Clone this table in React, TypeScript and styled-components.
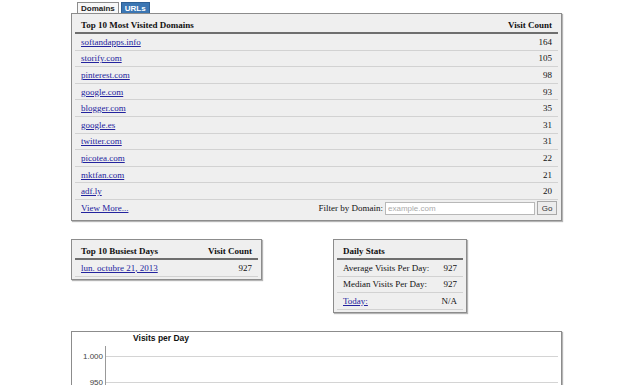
import styled, {createGlobalStyle} from "styled-components";

const GlobalStyle = createGlobalStyle`
  html, body {
    margin: 0;
    padding: 0;
    background: #ffffff;
  }
  body {
    font-family: "Liberation Serif", "Times New Roman", serif;
    font-size: 9px;
    color: #111;
  }
`

const Page = styled.div`
  display: flex;
  flex-direction: column;
  align-items: flex-start;
  padding: 2px 0 0 71px;
`

const TabBar = styled.div`
  display: flex;
  gap: 2px;
  padding-left: 6px;
  height: 11px;
`

const TabButton = styled.div<{ $active?: boolean }>`
  display: flex;
  align-items: center;
  padding: 0 3px;
  font-family: "Liberation Sans", Arial, sans-serif;
  font-size: 8px;
  font-weight: bold;
  border: 1px solid ${p => p.$active ? "#8c8c8c" : "#2d5f94"};
  border-bottom: none;
  background: ${p => p.$active ? "#f7f7f7" : "#3b76b3"};
  color: ${p => p.$active ? "#222" : "#fff"};
`

const Panel = styled.div<{ $width: number }>`
  box-sizing: border-box;
  width: ${p => p.$width}px;
  background: #efefef;
  border: 1px solid #8c8c8c;
  box-shadow: 1px 1px 1px #b5b5b5;
  padding: 4px 3px 3px;
`

const HeadRow = styled.div`
  display: flex;
  justify-content: space-between;
  align-items: center;
  height: 14px;
  padding: 0 6px;
  font-weight: bold;
  border-bottom: 2px solid #6e6e6e;
`

const Row = styled.div`
  box-sizing: border-box;
  display: flex;
  justify-content: space-between;
  align-items: center;
  height: 16.6px;
  padding: 0 6px;
  border-bottom: 1px solid #d2d2d2;
`

const Link = styled.a`
  color: #23239e;
  text-decoration: underline;
  cursor: pointer;
`

const Footer = styled.div`
  display: flex;
  align-items: center;
  justify-content: space-between;
  height: 17px;
  padding: 0 1px 0 6px;
`

const FilterForm = styled.div`
  display: flex;
  align-items: center;
  gap: 2px;
`

const FilterInput = styled.input`
  box-sizing: border-box;
  width: 150px;
  height: 13px;
  border: 1px solid #b8b8b8;
  background: #fff;
  padding: 0 2px;
  font-family: "Liberation Sans", Arial, sans-serif;
  font-size: 8px;
  outline: none;
  &::placeholder {
    color: #aaa;
  }
`

const GoButton = styled.button`
  box-sizing: border-box;
  height: 14px;
  width: 20px;
  padding: 0;
  border: 1px solid #a8a8a8;
  background: #ececec;
  font-family: "Liberation Sans", Arial, sans-serif;
  font-size: 8px;
  color: #333;
`

const StatsRow = styled.div`
  display: flex;
  align-items: flex-start;
  gap: 71px;
  margin-top: 18px;
`

const SmallPanel = styled(Panel)`
  padding: 4px 3px 2px;
`

const ChartBox = styled.div`
  box-sizing: border-box;
  width: 491px;
  height: 240px;
  margin-top: 18px;
  background: #fff;
  border: 1px solid #8c8c8c;
  box-shadow: 1px 1px 1px #b5b5b5;
`

const domains: [string, number][] = [
  ["softandapps.info", 164],
  ["storify.com", 105],
  ["pinterest.com", 98],
  ["google.com", 93],
  ["blogger.com", 35],
  ["google.es", 31],
  ["twitter.com", 31],
  ["picotea.com", 22],
  ["mktfan.com", 21],
  ["adf.ly", 20],
]

const VisitsChart = () => (
  <svg width="489" height="238" viewBox="0 0 489 238">
    <text x="61" y="9" fontFamily="Liberation Sans, Arial, sans-serif" fontSize="8.5" fontWeight="bold" fill="#111">
      Visits per Day
    </text>
    <line x1="33.5" y1="14" x2="33.5" y2="238" stroke="#999" />
    <line x1="34" y1="24.5" x2="486" y2="24.5" stroke="#d4d4d4" />
    <line x1="34" y1="50.5" x2="486" y2="50.5" stroke="#d4d4d4" />
    <text x="31" y="27" textAnchor="end" fontFamily="Liberation Sans, Arial, sans-serif" fontSize="8" fill="#444">1.000</text>
    <text x="31" y="53" textAnchor="end" fontFamily="Liberation Sans, Arial, sans-serif" fontSize="8" fill="#444">950</text>
  </svg>
)

export default function App() {
  return (
    <>
      <GlobalStyle/>
      <Page>
        <TabBar>
          <TabButton $active>Domains</TabButton>
          <TabButton>URLs</TabButton>
        </TabBar>
        <Panel $width={491}>
          <HeadRow>
            <span>Top 10 Most Visited Domains</span>
            <span>Visit Count</span>
          </HeadRow>
          {domains.map(([name, count]) => (
            <Row key={name}>
              <Link>{name}</Link>
              <span>{count}</span>
            </Row>
          ))}
          <Footer>
            <Link>View More...</Link>
            <FilterForm>
              <span>Filter by Domain:</span>
              <FilterInput placeholder="example.com"/>
              <GoButton>Go</GoButton>
            </FilterForm>
          </Footer>
        </Panel>
        <StatsRow>
          <SmallPanel $width={191}>
            <HeadRow>
              <span>Top 10 Busiest Days</span>
              <span>Visit Count</span>
            </HeadRow>
            <Row>
              <Link>lun. octubre 21, 2013</Link>
              <span>927</span>
            </Row>
          </SmallPanel>
          <SmallPanel $width={134}>
            <HeadRow>
              <span>Daily Stats</span>
            </HeadRow>
            <Row>
              <span>Average Visits Per Day:</span>
              <span>927</span>
            </Row>
            <Row>
              <span>Median Visits Per Day:</span>
              <span>927</span>
            </Row>
            <Row>
              <Link>Today:</Link>
              <span>N/A</span>
            </Row>
          </SmallPanel>
        </StatsRow>
        <ChartBox>
          <VisitsChart/>
        </ChartBox>
      </Page>
    </>
  )
}
